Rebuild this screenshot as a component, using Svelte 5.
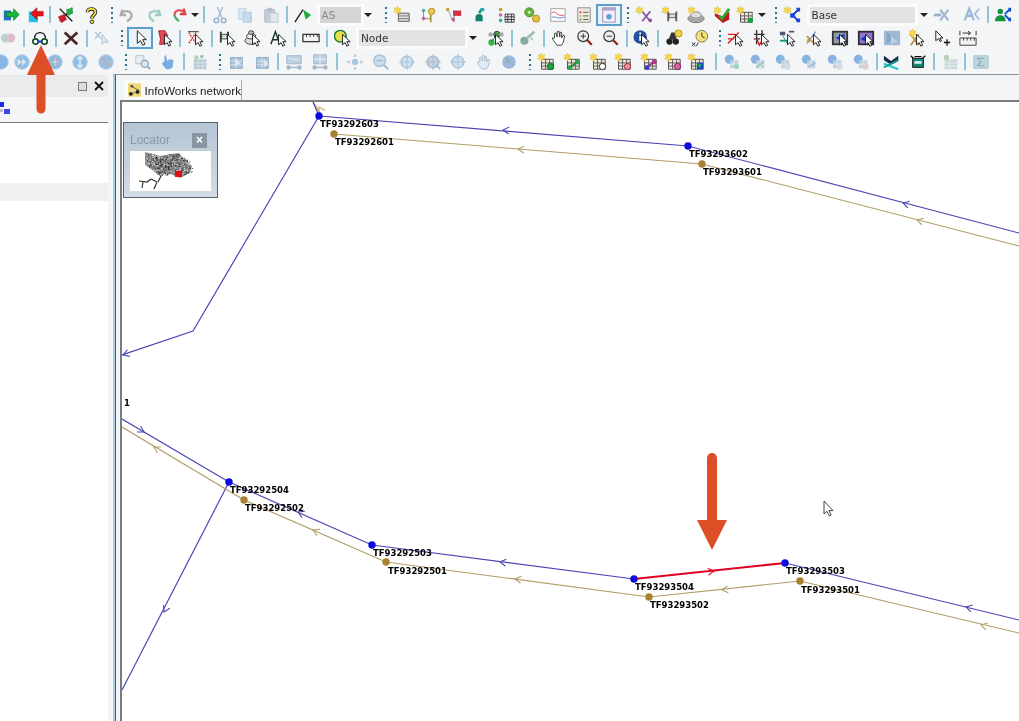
<script>
  // small 20x20 toolbar glyphs, screenshot is blurry so these stay simple
  const cur = `<path d="M9.5 6v11.5l2.8-2.4 2 4 2-1-2-4h3.6z" fill="#fff" stroke="#111"/>`
  const star = `<path d="M5 0l1 2.6 2.7-.6-1 2.6 1.6 2-2.7.2L5 9.2 3.4 6.8.7 6.6l1.6-2-1-2.6 2.7.6z" fill="#f8d84a" stroke="#d9b436" stroke-width=".5"/>`
  const grid = `<path d="M5 7h13v11H5z" fill="#efe9d8" stroke="#444"/><path d="M5 11h13M5 14.500h13M9.500 7v11M14 7v11" stroke="#555" fill="none"/>`
  const circ = (c, s) => `<circle cx="10" cy="10" r="8" fill="${c}" stroke="${s}"/>`
  const bluetab = `<path d="M4 5h13v12H4z" fill="#8fb2d2" stroke="#5f87ab"/><path d="M4 9h13M4 13h13M10 5v12" stroke="#cfe0ee"/>`
  const ball = `<circle cx="7" cy="7" r="5" fill="#5c9ad8"/><path d="M8 8h9v9H8z" fill="#a9c4da"/><path d="M8 12.500h9M12.500 8v9" stroke="#e3edf4"/>`

  const icons = {
    arrowG: `<path d="M2 5h8v11H2z" fill="#1d78c8"/><path d="M5 7h8V3l6 6.500-6 6.500v-4H5z" fill="#18b93a" stroke="#0a6a1c" stroke-width=".7"/>`,
    arrowR: `<path d="M2 6h10v12H2z" fill="#20c0e8"/><path d="M18 6h-7V2L4 8.500l7 6.500v-4h7z" fill="#e8121e" stroke="#98101a" stroke-width=".7"/>`,
    xflags: `<path d="M3 3l14 14" stroke="#222" stroke-width="1.500"/><path d="M17 2l-14 15" stroke="#222" stroke-width="1.500"/><path d="M1 12l7-3 3 6-6 4z" fill="#c8202c"/><path d="M10 4l7-2 1 6-6 3z" fill="#2aa84c"/>`,
    help: `<path d="M6 7c0-5 9-5 9 0 0 3-4 3-4 7" fill="none" stroke="#222" stroke-width="4"/><path d="M6 7c0-5 9-5 9 0 0 3-4 3-4 7" fill="none" stroke="#f2e03c" stroke-width="2"/><circle cx="11" cy="17.500" r="2" fill="#f2e03c" stroke="#222"/>`,
    undo: `<path d="M5 4l-2 6 6 0M3.500 9C7 4 16 5 15 11c-.4 3-3 5-5 6" fill="none" stroke="#8f8f8f" stroke-width="2.500"/>`,
    redo: `<path d="M15 4l2 6-6 0M16.500 9C13 4 4 5 5 11c.4 3 3 5 5 6" fill="none" stroke="#80c0b0" stroke-width="2.500"/>`,
    redoC: `<path d="M15 3l2 6-6 0" fill="none" stroke="#d84040" stroke-width="2.500"/><path d="M16 8C13 3 5 4 5 10" fill="none" stroke="#e05858" stroke-width="2.500"/><path d="M5 10c0 3 3 5 5 7" fill="none" stroke="#48b060" stroke-width="2.500"/>`,
    scissors: `<path d="M7 1l5 12M13 1L8 13" stroke="#7fa0c8" stroke-width="1.500"/><circle cx="6" cy="16" r="2.500" fill="none" stroke="#6a90c0" stroke-width="1.500"/><circle cx="14" cy="16" r="2.500" fill="none" stroke="#6a90c0" stroke-width="1.500"/>`,
    copy: `<path d="M3 3h8v12H3z" fill="#cfdff0" stroke="#a8c4de"/><path d="M8 7h9v11H8z" fill="#b8d0e8" stroke="#90b4d4"/>`,
    paste: `<path d="M3 4h11v14H3z" fill="#b4c0cc" stroke="#98a8b8"/><path d="M6 2h5v4H6z" fill="#98a8b8"/><path d="M9 8h9v10H9z" fill="#dbe4ec" stroke="#a8b8c8"/>`,
    flag: `<path d="M1 18L10 4" stroke="#222" stroke-width="1.500"/><path d="M10 4l9 6-6 5z" fill="#1ea838"/>`,
    tblStar: `<path d="M6 8h12v9H6z" fill="#ddd" stroke="#555"/><path d="M6 11h12M6 14h12" stroke="#777"/>${star}`,
    key: `<circle cx="14" cy="6" r="3.500" fill="#f0cc50" stroke="#a08820"/><path d="M13 9v9" stroke="#b09828" stroke-width="2"/><circle cx="5" cy="5" r="2" fill="#50b0a0"/><circle cx="5" cy="14" r="2" fill="#d060a0"/><path d="M5 5v9h8" fill="none" stroke="#888"/>`,
    flagN: `<path d="M3 3l5 12" stroke="#999"/><circle cx="3" cy="4" r="2" fill="#c8a040"/><path d="M9 5h9v6H9z" fill="#d83040"/><circle cx="9" cy="15" r="2" fill="#d060a0"/><path d="M10 5v13" stroke="#666"/>`,
    bottle: `<path d="M5 12c0-4 8-4 8 0v5H5z" fill="#128070"/><path d="M9 8l3-5" stroke="#30a070" stroke-width="3"/><circle cx="13" cy="4" r="2" fill="#20a0e0"/>`,
    nodesT: `<circle cx="4" cy="4" r="2" fill="#c0a030"/><circle cx="4" cy="10" r="2" fill="#d060a0"/><circle cx="4" cy="16" r="2" fill="#30b0a0"/><path d="M9 9h10v9H9z" fill="#eee" stroke="#333"/><path d="M9 12h10M9 15h10M12 9v9M16 9v9" stroke="#333"/>`,
    gears: `<circle cx="7" cy="7" r="5" fill="#68b838" stroke="#488828"/><circle cx="7" cy="7" r="1.500" fill="#dfe"/><circle cx="14.500" cy="14" r="4" fill="#e8c040" stroke="#a88820"/>`,
    chart: `<path d="M2 3h16v14H2z" fill="#fff" stroke="#999"/><path d="M3 8c4-5 6 5 14 2" fill="none" stroke="#e04848"/><path d="M3 13c4-3 6 3 14-1" fill="none" stroke="#4878d0"/>`,
    list: `<path d="M3 2h14v16H3z" fill="#eee8e0" stroke="#888"/><path d="M5 6h2v2H5z" fill="#d04040"/><path d="M5 10h2v2H5z" fill="#d8b030"/><path d="M5 14h2v2H5z" fill="#40a050"/><path d="M9 7h6M9 11h6M9 15h6" stroke="#555"/>`,
    win: `<path d="M3 2h14v16H3z" fill="#f2eef8" stroke="#9888b8"/><path d="M3 2h14v3H3z" fill="#b0a0d0"/><circle cx="10" cy="12" r="3" fill="#5a9ee0"/>`,
    starX: `<path d="M8 6l9 11M17 6L8 17" stroke="#8858a8" stroke-width="2"/><circle cx="17" cy="16" r="2" fill="#a040a0"/>${star}`,
    starH: `<path d="M8 6v11M17 6v11M8 11h9" stroke="#555" stroke-width="2" fill="none"/><path d="M9 9h7v4H9z" fill="#eee8c8" stroke="#555"/>${star}`,
    disc: `<ellipse cx="10" cy="14" rx="9" ry="4.500" fill="#aaa" stroke="#777"/><ellipse cx="10" cy="10" rx="6" ry="3.500" fill="#ddd" stroke="#888"/>${star}`,
    book: `<path d="M2 11l9 8 7-4V6l-7 6-9-4z" fill="#c01818"/><path d="M7 11l3 3 8-11" fill="none" stroke="#30a838" stroke-width="3"/>${star}`,
    tblG: `${grid}<circle cx="16" cy="16" r="3" fill="#18a040"/>${star}`,
    starNet: `<path d="M11 10l6-6M11 10l6 7" stroke="#1030c8" stroke-width="2"/><path d="M8 8h5v5H8zM15 2h4v4h-4zM15 14h4v4h-4z" fill="#1848d8"/>${star}`,
    fadeX: `<path d="M1 10h8" stroke="#7898c0" stroke-width="3"/><path d="M8 4l9 12M17 4L8 16" stroke="#7f9fc8" stroke-width="2.500"/>`,
    fadeA: `<path d="M2 16L7 3l5 13M4 11h6" fill="none" stroke="#7a9fd0" stroke-width="2.500"/><path d="M18 3l-5 6 5 6" fill="none" stroke="#88a8d8" stroke-width="2"/>`,
    person: `<circle cx="7" cy="6" r="3" fill="#159040"/><path d="M1 17c0-9 12-9 12 0z" fill="#159040"/><path d="M12 9l5-5M12 10l5 5" stroke="#1050d0" stroke-width="2"/><path d="M16 2h3v4h-3zM16 13h3v4h-3z" fill="#1050d0"/>`,
    fadeP: `<circle cx="7" cy="10" r="5" fill="#a8c8c0"/><circle cx="13" cy="10" r="5" fill="#d8a8c0"/>`,
    binoc: `<circle cx="5" cy="14" r="3" fill="#fff" stroke="#104820" stroke-width="1.800"/><circle cx="15" cy="14" r="3" fill="#fff" stroke="#104820" stroke-width="1.800"/><path d="M8 14h4" stroke="#1040e0" stroke-width="2.500"/><path d="M4 10C4 2 16 2 16 10" fill="none" stroke="#111" stroke-width="1.500"/>`,
    bigX: `<path d="M3 4l14 13M17 4L3 17" stroke="#4a2424" stroke-width="3"/>`,
    xCur: `<path d="M1 3l7 8M8 3l-7 8" stroke="#9ab0c8" stroke-width="1.500"/><path d="M9 6v11l3-2.400 4 0z" fill="#d8e8f4" stroke="#8aa8c8"/>`,
    cur: `<path d="M7 2v14l3.500-3 2.500 5 2.500-1.200-2.500-5H17z" fill="#fff" stroke="#111"/>`,
    redCur: `<path d="M3 2h7l3 5-3 5-2 5H4l1-6z" fill="#e24a5a" stroke="#a01828"/>${cur}`,
    redDot: `<path d="M2 4l8 12M10 4l-8 12" stroke="#d82020" stroke-width="1.500" stroke-dasharray="2 1"/><path d="M1 3h12" stroke="#222"/>${cur}`,
    hCur: `<path d="M2 3v12M10 3v12M2 8h8" stroke="#333" stroke-width="2"/><path d="M3 6h6v5H3z" fill="#cfe8d8" stroke="#444"/>${cur}`,
    stackCur: `<ellipse cx="8" cy="13" rx="7" ry="4" fill="#ddd" stroke="#333"/><ellipse cx="8" cy="8" rx="5" ry="3" fill="#eee" stroke="#333"/><ellipse cx="8" cy="4" rx="3" ry="2" fill="#bbb" stroke="#333"/>${cur}`,
    aCur: `<path d="M1 17L6 3l5 14M3 12h6" fill="none" stroke="#163a30" stroke-width="1.600"/>${cur}`,
    ruler: `<path d="M1 6h18v8H1z" fill="#f4f4f4" stroke="#333" stroke-width="1.400"/><path d="M5 6v3M9 6v3M13 6v3M17 6v3" stroke="#333"/>`,
    yelCur: `<circle cx="7" cy="8" r="6.500" fill="#e8e048" stroke="#187030" stroke-width="1.500"/>${cur}`,
    greenCur: `<circle cx="5" cy="15" r="3.500" fill="#30b840"/><circle cx="11" cy="6" r="3.500" fill="#50a050" stroke="#333"/><circle cx="4" cy="6" r="2.500" fill="#aaa"/><circle cx="16" cy="6" r="2.500" fill="#aaa"/><path d="M5 14l5-7" stroke="#246"/>${cur}`,
    fadeG: `<circle cx="6" cy="13" r="4.500" fill="#58907c"/><path d="M8 11l9-8" stroke="#78a898" stroke-width="3"/><circle cx="14" cy="11" r="1.500" fill="#98b8a8"/>`,
    hand: `<path d="M5 10V5l1.500-.6L8 9V3l2-.5L11 9V3.500l2 .5v6l1.500-3 1.800.6-1.500 7-2 3.400H8L4 13l-1.500-3z" fill="#fff" stroke="#333"/>`,
    zoomIn: `<circle cx="8" cy="8" r="6" fill="#eee" stroke="#333" stroke-width="1.300"/><path d="M5 8h6M8 5v6" stroke="#222"/><path d="M12.500 12.500l5 5" stroke="#a02020" stroke-width="2.500"/>`,
    zoomOut: `<circle cx="8" cy="8" r="6" fill="#eee" stroke="#333" stroke-width="1.300"/><path d="M5 8h6" stroke="#222"/><path d="M12.500 12.500l5 5" stroke="#a02020" stroke-width="2.500"/>`,
    info: `<circle cx="8" cy="9" r="7.500" fill="#2850a0"/><path d="M7 4h2v2H7zM7 7.500h2V13H7z" fill="#fff"/>${cur}`,
    binY: `<circle cx="5" cy="14" r="3.500" fill="#222"/><circle cx="12" cy="14" r="3.500" fill="#222"/><path d="M7 4l-3 8h9l-2-8z" fill="#333"/><circle cx="15" cy="5" r="4" fill="#f0d040" stroke="#b09020"/>`,
    clock: `<circle cx="12" cy="8" r="6.500" fill="#f4e070" stroke="#776"/><path d="M12 4v4l3 2" fill="none" stroke="#222"/><path d="M1 15l4 4M5 15l-4 4M8 15l-2 4" stroke="#222"/>`,
    redArr: `<path d="M1 16L13 4M1 6h8M1 11h7" stroke="#d82020" stroke-width="1.500"/>${cur}`,
    hash: `<path d="M4 1v16M10 1v7M1 6h12M1 11h7" stroke="#333" stroke-width="1.500"/><path d="M4 10l3 8 3-5" fill="none" stroke="#d02020" stroke-width="1.500"/>${cur}`,
    tealCur: `<path d="M1 3h6v4H1zM11 2h6v2h-6z" fill="#557"/><path d="M1 13h9" stroke="#189080" stroke-width="2"/><path d="M4 7l5 9" stroke="#189080"/>${cur}`,
    xyCur: `<path d="M2 16L12 3" stroke="#7898c8" stroke-width="1.500"/><path d="M2 8l8 8" stroke="#c09848" stroke-width="2"/><circle cx="4" cy="13" r="2" fill="#c09848"/>${cur}`,
    dark: `<path d="M1 2h18v16H1z" fill="#333"/><path d="M3 4h14v12H3z" fill="#9098a8"/><path d="M15 5L5 10l10 5z" fill="#1838c8"/>${cur}`,
    darkP: `<path d="M1 2h18v16H1z" fill="#302838"/><path d="M3 4h14v12H3z" fill="#9078c8"/><path d="M11 6L4 11l7 4z" fill="#1838b8"/>${cur}`,
    fadeD: `<path d="M1 2h18v16H1z" fill="#7fa4c4"/><path d="M4 4l11 6-11 6z" fill="#5f8ab8"/><path d="M9 7v10l3-2 4-.5z" fill="#a8c8e0"/>`,
    starCross: `<path d="M3 6l9 12M12 6L3 18" stroke="#c09040" stroke-width="2"/>${star}${cur}`,
    curPlus: `<path d="M2 2v11l3-2.500 1.800 3.500 1.500-.8L6.500 10H10z" fill="#fff" stroke="#111"/><path d="M11 15h7M14.500 11.500v7" stroke="#111" stroke-width="1.400"/>`,
    rulerA: `<path d="M1 10h18v8H1z" fill="#f4f4f4" stroke="#333"/><path d="M5 10v3M9 10v3M13 10v3M17 10v3" stroke="#333"/><path d="M1 2v5M19 2v5M4 4.500h8M10 2.500l3 2-3 2" fill="none" stroke="#222"/>`,
    dotF: circ('#5f9fdc', '#8ab8e4'),
    ffF: `${circ('#70a8dc', '#8ab8e4')}<path d="M5 6l5 4-5 4zM10 6l5 4-5 4z" fill="#cfe2f4"/>`,
    gridF: `${circ('#70a0d0', '#8ab8e4')}<path d="M6 6h8v8H6z" fill="#8098b8"/><path d="M10 6v8M6 10h8" stroke="#cfe2f4"/>`,
    upF: `${circ('#6aa6de', '#8ab8e4')}<path d="M10 4v12M7 7l3-3 3 3M7 13l3 3 3-3" fill="none" stroke="#e4f0fa" stroke-width="1.500"/>`,
    noF: `${circ('#78a8d8', '#8ab8e4')}<path d="M4 5l12 10" stroke="#c08890" stroke-width="1.500"/>`,
    srch: `<path d="M2 3h9v9H2z" fill="#e6eef4" stroke="#8aa8c0"/><circle cx="12" cy="12" r="4" fill="#cfe0ec" stroke="#6a90b0" stroke-width="1.500"/><path d="M15 15l3 3" stroke="#6a90b0" stroke-width="2"/>`,
    handB: `<path d="M6 9V3l2-.5L9 9l2-2 1 .5 2-.5 2 1-1 8-3 2H8l-5-6 1-1z" fill="#4a90d8"/>`,
    fadeT: `<path d="M3 7h14v11H3z" fill="#9ab8c8"/><path d="M3 11h14M3 14.500h14M8 7v11M13 7v11" stroke="#d8e4ec"/><circle cx="6" cy="5" r="2.500" fill="#a8c098"/><circle cx="12" cy="4" r="2" fill="#88a8b8"/>`,
    bt1: `${bluetab}<path d="M9 6v9l6-4z" fill="#d8e4f0"/>`,
    bt2: `${bluetab}<path d="M12 7v9l5-4z" fill="#e0e8f2"/>`,
    bar1: `<path d="M2 3h16v9H2z" fill="#a8c4dc" stroke="#7a9ebc"/><path d="M4 7c3-3 5 3 12 0" fill="none" stroke="#f0f4f8"/><circle cx="4" cy="16" r="2.500" fill="#8aa0b8"/><circle cx="16" cy="16" r="2.500" fill="#8aa0b8"/><path d="M4 16h12" stroke="#8aa0b8" stroke-width="1.500"/>`,
    bar2: `<path d="M3 2h14v10H3z" fill="#a8c4dc" stroke="#7a9ebc"/><path d="M3 7h14M10 2v10" stroke="#f0f4f8"/><circle cx="4" cy="16" r="2.500" fill="#8aa0b8"/><circle cx="16" cy="16" r="2.500" fill="#8aa0b8"/><path d="M4 16h12" stroke="#8aa0b8" stroke-width="1.500"/>`,
    move: `<circle cx="10" cy="10" r="3.500" fill="#8ab4d8"/><path d="M10 1l-2 3h4zM10 19l-2-3h4zM1 10l3-2v4zM19 10l-3-2v4z" fill="#88a8c0"/>`,
    zoomF: `<circle cx="8.500" cy="8.500" r="6.500" fill="#bcd4e8" stroke="#88aac8" stroke-width="1.500"/><path d="M5 8.500h7" stroke="#6a90b8"/><path d="M13 13l5 5" stroke="#88aac8" stroke-width="2.500"/>`,
    target: `<circle cx="10" cy="10" r="6.500" fill="#c4daec" stroke="#88aed0" stroke-width="1.500"/><path d="M10 1v18M1 10h18" stroke="#88aed0"/>`,
    target2: `<circle cx="10" cy="10" r="6.500" fill="#b4c8d8" stroke="#88a4bc" stroke-width="1.500"/><path d="M10 1v18M1 10h18" stroke="#88a4bc"/><path d="M13 13l5 5" stroke="#88a4bc" stroke-width="2"/>`,
    handF: `<path d="M5 10V5l1.500-.6L8 9V3l2-.5L11 9V3.500l2 .5v6l1.500-3 1.800.6-1.500 7-2 3.400H8L4 13l-1.500-3z" fill="#d8e6f2" stroke="#88a8c4"/>`,
    globe: `<circle cx="10" cy="10" r="7.500" fill="#7c9ed8"/><path d="M7 5l5 2-1 4-4 1zM13 12l2 1-2 3z" fill="#68a0a0"/>`,
    tGreen: `${grid}<circle cx="15" cy="15" r="3.500" fill="#18a83c" stroke="#0c6a24"/>${star}`,
    tLink: `${grid}<path d="M8 16l9-7" stroke="#188838" stroke-width="2"/><circle cx="8" cy="16" r="2.500" fill="#28a848"/><circle cx="16" cy="10" r="2.500" fill="#28a848"/>${star}`,
    tWhite: `${grid}<circle cx="15" cy="15" r="3.500" fill="#fff" stroke="#222"/>${star}`,
    tRed: `${grid}<circle cx="15" cy="15" r="3.500" fill="#e8909c" stroke="#a02838"/>${star}`,
    tPurp: `${grid}<path d="M7 16l10-7" stroke="#b02878" stroke-width="2"/><circle cx="8" cy="16" r="2.500" fill="#3040c8"/><circle cx="16" cy="10" r="2.500" fill="#c03090"/>${star}`,
    tPink: `${grid}<circle cx="15" cy="15" r="3.500" fill="#e060a0" stroke="#802060"/>${star}`,
    tBlue: `${grid}<path d="M11 11h7v7h-7z" fill="#1848d0"/><circle cx="14" cy="14" r="2" fill="#20b050"/>${star}`,
    b1: `${ball}<circle cx="15" cy="15" r="3" fill="#88c8a8"/>`,
    b2: `${ball}<path d="M8 16l8-6" stroke="#78b898" stroke-width="2"/>`,
    b3: `${ball}<circle cx="15" cy="15" r="3.500" fill="#c8d4e0"/>`,
    b4: `${ball}<path d="M10 15l7-4" stroke="#88a0c0" stroke-width="2"/>`,
    b5: `${ball}<circle cx="15" cy="15" r="3.500" fill="#d8c0c8"/>`,
    cross: `<path d="M1 3l8 6 8-6v6l-8 4-8-5z" fill="#182848"/><path d="M1 12l16 6" stroke="#20c8d8" stroke-width="2.500"/><path d="M1 16L17 8" stroke="#18a090" stroke-width="2"/>`,
    pot: `<path d="M4 6h12v10H4z" fill="#108878" stroke="#111"/><path d="M2 3l3 3M18 3l-3 3M6 4h8" stroke="#111" stroke-width="1.500"/><path d="M6 9h8v3H6z" fill="#d8f0f0"/>`,
    fadeTb: `<path d="M4 7h14v11H4z" fill="#b8cccc"/><path d="M4 11h14M4 14.500h14M10 7v11" stroke="#e8f0f0"/><circle cx="6" cy="5" r="3" fill="#a8c0a8"/>`,
    sigma: `<path d="M2 3h16v14H2z" fill="#a8ccd8" stroke="#88b0c0"/><path d="M14 6H6l4 4-4 4h8" fill="none" stroke="#6898a8" stroke-width="1.500"/>`
  }

  // x is the centre of each item as seen on the toolbar
  const row1 = [
    [11,'arrowG'],[36,'arrowR'],[50,'sep'],[66,'xflags'],[91,'help'],[112,'dots'],[127,'undo'],[154,'redo'],[179,'redoC'],[195,'caret'],[204,'sep'],
    [220,'scissors'],[245,'copy'],[271,'paste'],[287,'sep'],[303,'flag'],[340,'combo','AS',41,'ghost'],[368,'caret'],[386,'dots'],
    [402,'tblStar'],[428,'key'],[454,'flagN'],[480,'bottle'],[506,'nodesT'],[532,'gears'],[558,'chart'],[584,'list'],[609,'win','on'],[628,'dots'],
    [644,'starX'],[670,'starH'],[696,'disc'],[722,'book'],[745,'tblG'],[762,'caret'],[776,'dots'],[792,'starNet'],[862,'combo','Base',105],[924,'caret'],
    [942,'fadeX'],[972,'fadeA'],[988,'sep'],[1003,'person']
  ]
  const row2 = [
    [8,'fadeP'],[24,'sep'],[40,'binoc'],[56,'sep'],[71,'bigX'],[87,'sep'],[103,'xCur'],[122,'dots'],[140,'cur','on'],[165,'redCur'],[180,'sep'],[196,'redDot'],[212,'sep'],
    [228,'hCur'],[253,'stackCur'],[279,'aCur'],[295,'sep'],[311,'ruler'],[327,'sep'],[343,'yelCur'],[412,'combo','Node',106],[473,'caret'],[496,'greenCur'],[512,'sep'],
    [528,'fadeG'],[544,'sep'],[559,'hand'],[585,'zoomIn'],[611,'zoomOut'],[627,'sep'],[642,'info'],[658,'sep'],[674,'binY'],[700,'clock'],[720,'dots'],
    [736,'redArr'],[762,'hash'],[788,'tealCur'],[814,'xyCur'],[840,'dark'],[866,'darkP'],[892,'fadeD'],[917,'starCross'],[943,'curPlus'],[968,'rulerA']
  ]
  const row3 = [
    [1,'dotF'],[22,'ffF'],[55,'gridF'],[80,'upF'],[106,'noF'],[126,'dots'],[143,'srch'],[168,'handB'],[184,'sep'],[200,'fadeT'],[220,'dots'],[236,'bt1'],[262,'bt2'],[278,'sep'],
    [294,'bar1'],[320,'bar2'],[337,'sep'],[355,'move'],[381,'zoomF'],[407,'target'],[433,'target2'],[458,'target'],[484,'handF'],[509,'globe'],[530,'dots'],
    [546,'tGreen'],[572,'tLink'],[598,'tWhite'],[623,'tRed'],[649,'tPurp'],[673,'tPink'],[696,'tBlue'],[716,'sep'],[732,'b1'],[758,'b2'],[783,'b3'],[809,'b4'],[835,'b3'],[861,'b5'],[877,'sep'],
    [892,'cross'],[918,'pot'],[934,'sep'],[950,'fadeTb'],[965,'sep'],[981,'sigma']
  ]

  const widthOf = (it) => it[1] === 'combo' ? it[3] : it[1] === 'sep' ? 2 : it[1] === 'dots' ? 2 : it[1] === 'caret' ? 8 : it[2] === 'on' ? 26 : 22
  const faded = new Set(['undo','redo','scissors','copy','paste','fadeX','fadeA','fadeP','xCur','fadeG','fadeD','dotF','ffF','gridF','upF','noF','srch','handB','fadeT','bt1','bt2','bar1','bar2','move','zoomF','target','target2','handF','globe','b1','b2','b3','b4','b5','fadeTb','sigma'])

  const layout = (row) => {
    let right = 0
    return row.map((it) => {
      const w = widthOf(it)
      const left = it[0] - w / 2
      const gap = left - right
      right = left + w
      return { kind: it[1], text: it[2], tone: it[4], on: it[2] === 'on', w, gap }
    })
  }
  const rows = [row1, row2, row3].map(layout)

  const blue = '#4c45b4'
  const tan = '#b39d68'
  const wires = [
    { c: tan, d: 'M313 102L320 113' },
    { c: blue, d: 'M313 102L319 116L688 146L1019 233' },
    { c: blue, d: 'M319 116L193 331L122 355' },
    { c: tan, d: 'M334 134L702 164L1019 246' },
    { c: blue, d: 'M122 419L229 482L372 545L634 579' },
    { c: blue, d: 'M785 563L1019 620' },
    { c: blue, d: 'M229 482L122 690' },
    { c: tan, d: 'M122 427L244 500L386 562L649 597L800 581L1019 633' }
  ]
  // head position plus direction in degrees, 0 pointing right
  const heads = [
    { x: 503, y: 130, a: 185, c: blue }, { x: 903, y: 203, a: 195, c: blue }, { x: 518, y: 149, a: 185, c: tan }, { x: 917, y: 220, a: 195, c: tan },
    { x: 123, y: 355, a: 161, c: blue }, { x: 319, y: 107, a: 240, c: '#c8a850' }, { x: 144, y: 432, a: 30, c: blue }, { x: 154, y: 447, a: 210, c: tan },
    { x: 298, y: 512, a: 204, c: blue }, { x: 313, y: 530, a: 204, c: tan }, { x: 500, y: 562, a: 187, c: blue }, { x: 515, y: 579, a: 187, c: tan },
    { x: 164, y: 612, a: 117, c: blue }, { x: 714, y: 571, a: 354, c: '#e00020' }, { x: 722, y: 590, a: 174, c: tan }, { x: 966, y: 607, a: 194, c: blue }, { x: 981, y: 625, a: 194, c: tan }
  ]
  const blueNodes = [[319,116],[688,146],[229,482],[372,545],[634,579],[785,563]]
  const tanNodes = [[334,134],[702,164],[244,500],[386,562],[649,597],[800,581]]
  const labels = [
    ['TF93292603',320,127],['TF93292601',335,145],['TF93293602',689,157],['TF93293601',703,175],
    ['TF93292504',230,493],['TF93292502',245,511],['TF93292503',373,556],['TF93292501',388,574],
    ['TF93293504',635,590],['TF93293502',650,608],['TF93293503',786,574],['TF93293501',801,593]
  ]

  // speckled network for the locator thumbnail
  const hash = (n) => {
    const v = Math.sin(n * 12.9898) * 43758.5453
    return v - Math.floor(v)
  }
  const inBlob = (x, y) => {
    const top = x < 30 ? 1 + (x - 15) * 0.25 : x < 48 ? 5 - (x - 30) * 0.2 : 2 + (x - 48) * 0.7
    const bottom = x < 30 ? 14 + (x - 15) * 0.7 : x < 48 ? 25 - (x - 30) * 0.2 : 26 - (x - 48) * 0.4
    return x > 15 && x < 62 && y > top && y < bottom
  }
  const speck = []
  for (let i = 0; i < 1500; i++) {
    const x = hash(i) * 81
    const y = hash(i + 5000) * 40
    if (inBlob(x, y)) speck.push([x.toFixed(1), y.toFixed(1), i % 3 === 0 ? '#eee' : i % 3 === 1 ? '#111' : '#555'])
  }
</script>

<div class="app">
  <div class="toolbars">
    {#each rows as row}
      <div class="tb-row">
        {#each row as item}
          {#if item.kind === 'sep'}
            <span class="sep" style="margin-left:{item.gap}px"></span>
          {:else if item.kind === 'dots'}
            <span class="dots" style="margin-left:{item.gap}px"></span>
          {:else if item.kind === 'caret'}
            <span class="caret" style="margin-left:{item.gap}px"></span>
          {:else if item.kind === 'combo'}
            <span class="combo" class:ghost={item.tone === 'ghost'} style="margin-left:{item.gap}px;width:{item.w}px">{item.text}</span>
          {:else}
            <span class="tool" class:on={item.on} class:faded={faded.has(item.kind)} style="margin-left:{item.gap}px;width:{item.w}px">
              <svg viewBox="0 0 20 20" width="18" height="18">{@html icons[item.kind]}</svg>
            </span>
          {/if}
        {/each}
      </div>
    {/each}
  </div>

  <div class="work">
    <aside class="side">
      <div class="side-head">
        <span class="max"></span>
        <svg class="close" viewBox="0 0 10 10" width="10" height="10"><path d="M1 1l8 8M9 1L1 9" stroke="#111" stroke-width="1.800"/></svg>
      </div>
      <div class="side-tools">
        <svg viewBox="0 0 10 12" width="10" height="12"><path d="M0 0h4v5H0z" fill="#1c2ce0"/><path d="M0 7h3v3H0z" fill="#bbb"/><path d="M4 7h6v5H4z" fill="#3848e0"/></svg>
      </div>
      <div class="side-body">
        <div class="side-pick"></div>
      </div>
    </aside>

    <main class="doc">
      <div class="tabs">
        <div class="tab">
          <svg viewBox="0 0 14 14" width="14" height="14">
            <path d="M0 0h14v14H0z" fill="#f0d878"/>
            <path d="M3 3l8 4-6 4" fill="none" stroke="#666"/>
            <circle cx="3" cy="11" r="2" fill="#222"/><circle cx="10" cy="9" r="2" fill="#222"/><circle cx="4" cy="3" r="1.500" fill="#555"/>
          </svg>
          <span>InfoWorks network</span>
        </div>
      </div>
      <div class="map">
        <svg class="net" viewBox="122 102 897 619" width="897" height="619">
          {#each wires as w}
            <path d={w.d} fill="none" stroke={w.c} stroke-width="1.200"/>
          {/each}
          <path d="M634 579L785 563" stroke="#e00020" stroke-width="2.200"/>
          {#each heads as h}
            <path d="M-6 -3.500L0 0L-6 3.500" fill="none" stroke={h.c} stroke-width="1.100" transform="translate({h.x} {h.y}) rotate({h.a})"/>
          {/each}
          {#each tanNodes as n}
            <circle cx={n[0]} cy={n[1]} r="3.700" fill="#a9812f"/>
          {/each}
          {#each blueNodes as n}
            <circle cx={n[0]} cy={n[1]} r="3.700" fill="#0a0ae0"/>
          {/each}
          {#each labels as l}
            <text x={l[1]} y={l[2]}>{l[0]}</text>
          {/each}
          <text x="124" y="406">1</text>
          <path d="M824 501v13l3-2.600 2.400 4.600 1.800-1-2.300-4.400h4.100z" fill="#fff" stroke="#444"/>
        </svg>

        <div class="locator">
          <div class="loc-head">
            <span>Locator</span>
            <b>×</b>
          </div>
          <div class="loc-map">
            <svg viewBox="0 0 81 40" width="81" height="40">
              <path d="M15 1L30 5L48 2L62 15L60 22L50 27L38 22L30 25L15 14z" fill="#8a8a8a"/>
              {#each speck as s}
                <rect x={s[0]} y={s[1]} width="1" height="1" fill={s[2]}/>
              {/each}
              <path d="M9 30l8 1 4-3M13 31l-1 6M21 28l6 3M27 31l-3 7M31 25l-3 6" fill="none" stroke="#333" stroke-width="1.200"/>
              <path d="M45 20h7v6h-7z" fill="#e01018"/>
            </svg>
          </div>
        </div>
      </div>
    </main>
  </div>

  <svg class="pointer up" viewBox="0 0 30 69" width="30" height="69"><path d="M15 0L29 30H19.500V64a4.500 4.500 0 0 1-9 0V30H1z" fill="#dc4f27"/></svg>
  <svg class="pointer down" viewBox="0 0 30 98" width="30" height="98"><path d="M15 97L0 67H10V5a5 5 0 0 1 10 0V67H30z" fill="#dc4f27"/></svg>
</div>

<style>
  :global(body) { margin: 0; overflow: hidden; }

  .app {
    position: relative;
    width: 1019px;
    height: 721px;
    overflow: hidden;
    background: #f4f5f6;
    font-family: "DejaVu Sans", sans-serif;
    display: flex;
    flex-direction: column;
    filter: blur(0.35px);
  }

  .toolbars {
    height: 74px;
    padding-top: 3px;
    box-sizing: border-box;
    overflow: hidden;
  }

  .tb-row {
    display: flex;
    align-items: center;
    height: 23.500px;
    white-space: nowrap;
  }

  .tool {
    flex: none;
    height: 22px;
    display: flex;
    align-items: center;
    justify-content: center;
    box-sizing: border-box;
  }
  .tool.faded svg { opacity: 0.72; }
  .tool.on {
    height: 22px;
    border: 2px solid #5b9fc9;
    background: #eaf3f9;
  }
  .tool.on svg { flex: none; }

  .sep { flex: none; width: 2px; height: 17px; background: #8fc4dc; }
  .dots {
    flex: none;
    width: 2px;
    height: 16px;
    background: repeating-linear-gradient(to bottom, #2f6f90 0 2px, transparent 2px 5px);
  }
  .caret {
    flex: none;
    width: 0;
    height: 0;
    border-left: 4px solid transparent;
    border-right: 4px solid transparent;
    border-top: 4px solid #222;
  }

  .combo {
    flex: none;
    height: 16px;
    line-height: 16px;
    padding-left: 2px;
    box-sizing: border-box;
    background: #e3e3e3;
    font-size: 10.500px;
    color: #333;
    outline: 3px solid #fbfbfb;
    outline-offset: 0;
  }
  .combo.ghost { background: #d6d6d6; color: #888; }

  .work { flex: 1; display: flex; min-height: 0; }

  .side { width: 108px; flex: none; display: flex; flex-direction: column; }
  .side-head {
    height: 22px;
    margin-top: 1px;
    background: #eaebec;
    display: flex;
    align-items: center;
    justify-content: flex-end;
    gap: 7px;
    padding-right: 4px;
  }
  .max { width: 7px; height: 7px; border: 1px solid #777; background: #ddd; }
  .side-tools { height: 25px; padding-top: 5px; box-sizing: border-box; overflow: hidden; }
  .side-tools svg { display: block; }
  .side-body {
    flex: 1;
    background: #fff;
    border-top: 1px solid #777;
    padding-top: 60px;
  }
  .side-pick { height: 18px; background: #f0f0f1; }

  .doc {
    margin-left: 5px;
    flex: 1;
    min-width: 0;
    border-left: 2px solid #a4cfe2;
    border-top: 1px solid #8a9299;
    display: flex;
    flex-direction: column;
    background: #f3f4f6;
    box-shadow: inset 1px 0 0 #555;
  }

  .tabs { height: 25px; flex: none; padding-left: 9px; box-sizing: border-box; padding-top: 5px; }
  .tab {
    display: inline-flex;
    align-items: center;
    gap: 3px;
    height: 20px;
    width: 118px;
    box-sizing: border-box;
    padding-left: 4px;
    background: #f8f9f9;
    border-right: 1px solid #aaa;
    font-family: "Liberation Sans", sans-serif;
    font-size: 11.700px;
    color: #222;
    white-space: nowrap;
  }

  .map {
    flex: 1;
    position: relative;
    margin-left: 5px;
    background: #fff;
    border-left: 2px solid #7c7c7c;
    border-top: 2px solid #7c7c7c;
    overflow: hidden;
  }
  .net { display: block; }
  .net text {
    font-family: "DejaVu Sans", sans-serif;
    font-weight: 700;
    font-size: 8.500px;
    fill: #000;
  }

  .locator {
    position: absolute;
    left: 1px;
    top: 20px;
    width: 95px;
    height: 76px;
    box-sizing: border-box;
    border: 1px solid #55626e;
    background: linear-gradient(#b5c5d5, #d2dce6);
    padding: 0 6px;
  }
  .loc-head {
    height: 28px;
    display: flex;
    align-items: center;
    justify-content: space-between;
    padding-top: 6px;
    box-sizing: border-box;
    font-size: 11px;
    color: #8a97a5;
    font-family: "Liberation Sans", sans-serif;
  }
  .loc-head span { font-size: 12px; }
  .loc-head b {
    width: 15px;
    height: 15px;
    line-height: 14px;
    text-align: center;
    color: #fff;
    background: #8995a3;
    margin-right: 4px;
    font-size: 12px;
  }
  .loc-map { height: 40px; background: #fff; }
  .loc-map svg { display: block; }

  .pointer { position: absolute; }
  .up { left: 26px; top: 45px; }
  .down { left: 697px; top: 453px; }
</style>
